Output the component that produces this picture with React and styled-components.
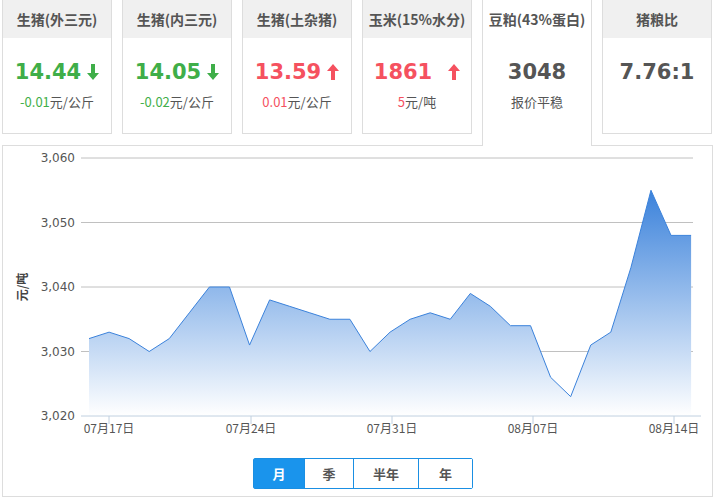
import React from 'react';
import styled, { createGlobalStyle } from 'styled-components';

const Global = createGlobalStyle`
  body { margin: 0; font-family: "Microsoft YaHei", "Noto Sans CJK SC", sans-serif; background: #fff; }
`;

const GREEN = '#3fae49';
const RED = '#f5515f';

const cards = [
  { title: '生猪(外三元)', value: '14.44', dir: 'down', delta: '-0.01', unit: '元/公斤' },
  { title: '生猪(内三元)', value: '14.05', dir: 'down', delta: '-0.02', unit: '元/公斤' },
  { title: '生猪(土杂猪)', value: '13.59', dir: 'up', delta: '0.01', unit: '元/公斤' },
  { title: '玉米(15%水分)', value: '1861', dir: 'up', delta: '5', unit: '元/吨', wide: true },
  { title: '豆粕(43%蛋白)', value: '3048', sub: '报价平稳', active: true },
  { title: '猪粮比', value: '7.76:1' },
];

const values = [3032, 3033, 3032, 3030, 3032, 3036, 3040, 3040, 3031, 3038, 3037, 3036, 3035, 3035,
  3030, 3033, 3035, 3036, 3035, 3039, 3037, 3034, 3034, 3026, 3023, 3031, 3033, 3043, 3055, 3048, 3048];

const Page = styled.div`
  width: 715px;
  height: 500px;
  position: relative;
`;

const CardRow = styled.div`
  display: flex;
  gap: 10px;
  padding-left: 2px;
  position: relative;
  z-index: 1;
`;

const Card = styled.div`
  width: 110px;
  height: ${p => (p.$active ? '146px' : '134px')};
  box-sizing: border-box;
  border: 1px solid #ddd;
  border-top: none;
  border-bottom: ${p => (p.$active ? 'none' : '1px solid #ddd')};
  background: #fff;
  display: flex;
  flex-direction: column;
  align-items: center;
`;

const CardHead = styled.div`
  align-self: stretch;
  height: 38px;
  background: #f0f0f0;
  display: flex;
  align-items: center;
  justify-content: center;
  font-size: 14px;
  font-weight: bold;
  color: #555;
`;

const Value = styled.div`
  margin-top: 22px;
  font-family: Verdana, "DejaVu Sans", sans-serif;
  font-size: 21px;
  font-weight: bold;
  color: ${p => p.$color || '#555'};
  display: flex;
  align-items: center;
  gap: ${p => (p.$wide ? '16px' : '6px')};
`;

const Sub = styled.div`
  margin-top: 8px;
  font-size: 13px;
  color: #555;
  span { color: ${p => p.$color}; }
`;

const ChartPanel = styled.div`
  position: absolute;
  left: 2px;
  top: 145px;
  width: 711px;
  height: 352px;
  box-sizing: border-box;
  border: 1px solid #ddd;
`;

const Tabs = styled.div`
  position: absolute;
  left: 250px;
  top: 312px;
  display: flex;
  border: 1px solid #1a8fe3;
  border-radius: 2px;
  height: 29px;
`;

const TabBtn = styled.div`
  width: ${p => p.$w}px;
  display: flex;
  align-items: center;
  justify-content: center;
  font-size: 13px;
  font-weight: bold;
  color: ${p => (p.$on ? '#fff' : '#555')};
  background: ${p => (p.$on ? '#1a94ec' : '#fff')};
  border-left: ${p => (p.$first ? 'none' : '1px solid #1a8fe3')};
`;

const Arrow = ({ dir, color }) => (
  <svg width="12" height="16" viewBox="0 0 12 16">
    {dir === 'down' ? (
      <path d="M4 0h4v9h4l-6 7-6-7h4z" fill={color} />
    ) : (
      <path d="M4 16h4V7h4L6 0 0 7h4z" fill={color} />
    )}
  </svg>
);

const Chart = () => {
  const x0 = 86;
  const dx = 20.07;
  const y = v => 415 - (v - 3020) * 6.45 - 145;
  const pts = values.map((v, i) => [x0 + i * dx, y(v)]);
  const line = pts.map(p => p.join(',')).join(' ');
  const area = `${x0},${y(3020)} ${line} ${pts[pts.length - 1][0]},${y(3020)}`;
  const ticks = [[106, '07月17日'], [248, '07月24日'], [389, '07月31日'], [530, '08月07日'], [671, '08月14日']];
  return (
    <svg width="709" height="300" style={{ position: 'absolute', left: 0, top: 0 }}>
      <defs>
        <linearGradient id="g" x1="0" y1="0" x2="0" y2="1">
          <stop offset="0" stopColor="#3b82db" />
          <stop offset="1" stopColor="#fff" />
        </linearGradient>
      </defs>
      {[3060, 3050, 3040, 3030].map(v => (
        <line key={v} x1="78" x2="690" y1={y(v)} y2={y(v)} stroke="#c0c0c0" />
      ))}
      <polygon points={area} fill="url(#g)" />
      <polyline points={line} fill="none" stroke="#3b82db" strokeWidth="1" />
      <line x1="78" x2="698" y1={y(3020)} y2={y(3020)} stroke="#c0d0e0" />
      {[3060, 3050, 3040, 3030, 3020].map(v => (
        <text key={v} x="72" y={y(v) + 4} textAnchor="end" fontSize="12" fill="#555" fontFamily="Verdana, DejaVu Sans, sans-serif">
          {v.toLocaleString('en-US')}
        </text>
      ))}
      {ticks.map(([tx, t]) => (
        <g key={t}>
          <line x1={tx} x2={tx} y1={y(3020)} y2={y(3020) + 8} stroke="#c0d0e0" />
          <text x={tx} y={y(3020) + 17} textAnchor="middle" fontSize="12" fill="#555">{t}</text>
        </g>
      ))}
      <text transform={`translate(24 ${y(3040)}) rotate(-90)`} textAnchor="middle" fontSize="12" fill="#444" fontWeight="bold">元/吨</text>
    </svg>
  );
};

export default function App() {
  return (
    <Page>
      <Global />
      <CardRow>
        {cards.map(c => {
          const color = c.dir === 'down' ? GREEN : c.dir === 'up' ? RED : undefined;
          return (
            <Card key={c.title} $active={c.active}>
              <CardHead style={c.active ? { background: '#fff' } : undefined}>{c.title}</CardHead>
              <Value $color={color} $wide={c.wide}>
                {c.value}
                {c.dir && <Arrow dir={c.dir} color={color} />}
              </Value>
              {c.delta && <Sub $color={color}><span>{c.delta}</span>{c.unit}</Sub>}
              {c.sub && <Sub>{c.sub}</Sub>}
            </Card>
          );
        })}
      </CardRow>
      <ChartPanel>
        <Chart />
        <Tabs>
          <TabBtn $w={50} $on $first>月</TabBtn>
          <TabBtn $w={48}>季</TabBtn>
          <TabBtn $w={64}>半年</TabBtn>
          <TabBtn $w={53}>年</TabBtn>
        </Tabs>
      </ChartPanel>
    </Page>
  );
}
